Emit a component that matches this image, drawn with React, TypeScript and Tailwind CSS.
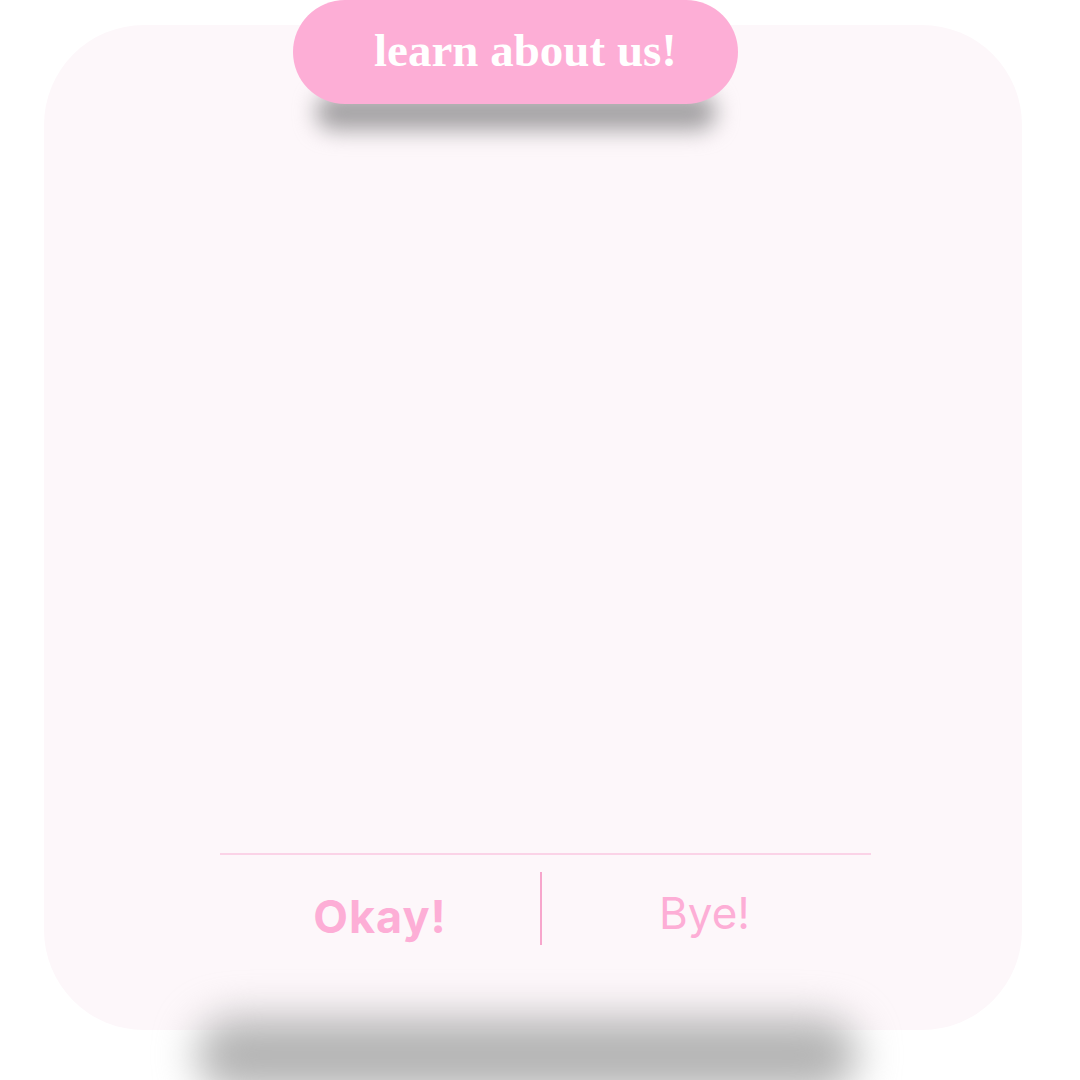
import React from "react";

export default function App() {
  return (
    <div className="relative w-[1080px] h-[1080px] bg-white overflow-hidden">
      <div className="pt-[25px] pl-[44px]">
        <div className="w-[978px] h-[1005px] rounded-[100px] bg-[#fdf7fa] flex flex-col">
          <div className="flex-1" />
          <div className="ml-[176px] w-[651px] mb-[85px]">
            <div className="h-[2px] bg-[#fbd3e7]" />
            <div className="flex items-center h-[90px] pt-[16px]">
              <button className="w-[320px] h-full flex items-center justify-center pt-[16px] text-[45px] font-bold text-[#fdaed6] leading-none tracking-[1px]" style={{ fontFamily: "Inter, 'Noto Sans', sans-serif" }}>
                Okay!
              </button>
              <div className="w-[2px] h-[73px] bg-[#f7a6cc]" />
              <button className="flex-1 h-full flex items-center justify-center pt-[10px] pr-[4px] text-[44px] font-normal text-[#fdaed6] leading-none" style={{ fontFamily: "Inter, 'Noto Sans', sans-serif" }}>
                Bye!
              </button>
            </div>
          </div>
        </div>
      </div>

      {/* bottom shadow */}
      <div className="absolute left-[196px] top-[1018px] w-[662px] h-[74px] rounded-[40px] bg-[#b4b4b4] blur-[20px]" />

      {/* top pill shadow */}
      <div className="absolute left-[316px] top-[94px] w-[400px] h-[36px] rounded-full bg-[#a3a1a3] blur-[11px]" />

      {/* top pill */}
      <div className="absolute left-[293px] top-0 w-[445px] h-[104px] rounded-full bg-[#fdaed6] flex items-center justify-center pl-[20px]">
        <span className="text-white font-bold text-[47px] leading-none pb-[4px]" style={{ fontFamily: "'Liberation Serif', serif" }}>
          learn about us!
        </span>
      </div>
    </div>
  );
}
